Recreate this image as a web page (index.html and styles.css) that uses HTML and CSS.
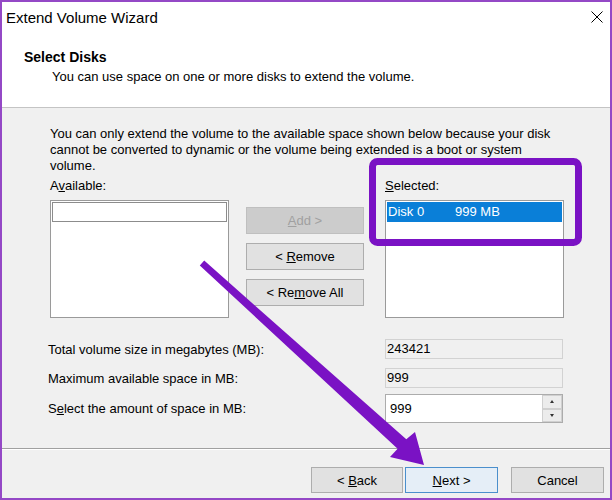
FILE: index.html
```html
<!DOCTYPE html>
<html lang="en">
<head>
    <meta charset="UTF-8">
    <title>Extend Volume Wizard</title>
    <link rel="stylesheet" href="styles.css">
</head>
<body>
    <div class="window">
        <div class="titlebar">
            <span class="title">Extend Volume Wizard</span>
            <svg class="close" width="12" height="12" viewBox="0 0 12 12">
                <path d="M0.5 0.5 L11.5 11.5 M11.5 0.5 L0.5 11.5" stroke="#000" stroke-width="1" fill="none"/>
            </svg>
        </div>

        <div class="header">
            <div class="header-title">Select Disks</div>
            <div class="header-sub">You can use space on one or more disks to extend the volume.</div>
        </div>

        <div class="content">
            <p class="note">You can only extend the volume to the available space shown below because your disk<br>cannot be converted to dynamic or the volume being extended is a boot or system<br>volume.</p>

            <div class="picker">
                <div class="col">
                    <div class="label">A<u>v</u>ailable:</div>
                    <div class="listbox">
                        <div class="focus-row"></div>
                    </div>
                </div>
                <div class="col-buttons">
                    <button class="btn disabled"><u>A</u>dd &gt;</button>
                    <button class="btn">&lt; <u>R</u>emove</button>
                    <button class="btn">&lt; Re<u>m</u>ove All</button>
                </div>
                <div class="col col-right">
                    <div class="label"><u>S</u>elected:</div>
                    <div class="listbox">
                        <div class="item selected">
                            <span class="item-name">Disk 0</span>
                            <span>999 MB</span>
                        </div>
                    </div>
                </div>
            </div>

            <div class="fields">
                <div class="row">
                    <span class="row-label">Total volume size in megabytes (MB):</span>
                    <div class="readonly">243421</div>
                </div>
                <div class="row row-2">
                    <span class="row-label">Maximum available space in MB:</span>
                    <div class="readonly">999</div>
                </div>
                <div class="row row-3">
                    <span class="row-label">S<u>e</u>lect the amount of space in MB:</span>
                    <div class="spin">
                        <span class="spin-value">999</span>
                        <div class="spin-buttons">
                            <div class="spin-btn"><span class="tri-up"></span></div>
                            <div class="spin-btn"><span class="tri-down"></span></div>
                        </div>
                    </div>
                </div>
            </div>
        </div>

        <div class="footer">
            <button class="btn btn-back">&lt; <u>B</u>ack</button>
            <button class="btn btn-next"><u>N</u>ext &gt;</button>
            <button class="btn btn-cancel">Cancel</button>
        </div>

        <!-- annotation drawn over the dialog -->
        <svg class="overlay" width="612" height="500" viewBox="0 0 612 500">
            <rect x="372.5" y="161.5" width="206" height="81" rx="5" ry="5" fill="none" stroke="#7a12c4" stroke-width="7"/>
            <polygon points="204.2,260.6 406.3,439.3 415,432 424,465 390,457 397.6,448.8 199.8,265.4" fill="#7a12c4"/>
        </svg>
    </div>
</body>
</html>
```

FILE: styles.css
```css
body {
    margin: 0;
    padding: 0;
    font-family: "Liberation Sans", Arial, sans-serif;
    font-size: 13px;
    color: #000;
}
.window {
    position: relative;
    width: 612px;
    height: 500px;
    box-sizing: border-box;
    border: 2px solid #9448c6;
    background-color: #f0f0f0;
    display: flex;
    flex-direction: column;
}
.titlebar {
    height: 30px;
    background-color: #fff;
    display: flex;
    align-items: center;
    justify-content: space-between;
    padding-left: 4px;
    padding-right: 7px;
}
.title {
    font-size: 15px;
}
.header {
    background-color: #fff;
    padding: 16px 0 22px 22px;
    border-bottom: 1px solid #c4c4c4;
}
.header-title {
    font-weight: bold;
    font-size: 14px;
    line-height: 18px;
}
.header-sub {
    line-height: 16px;
    margin-top: 3px;
    margin-left: 28px;
}
.content {
    flex: 1;
    padding: 18px 0 0 48px;
}
.note {
    margin: 0;
    line-height: 16px;
}
.picker {
    display: flex;
    margin-top: 4px;
}
.col {
    width: 179px;
}
.col-right {
    margin-left: 21px;
}
.label {
    line-height: 16px;
    height: 16px;
}
.listbox {
    margin-top: 6px;
    height: 118px;
    box-sizing: border-box;
    border: 1px solid #9a9a9a;
    background-color: #fff;
    padding: 1px;
}
.focus-row {
    height: 20px;
    box-sizing: border-box;
    border: 1px solid #8c8c8c;
}
.item {
    height: 20px;
    line-height: 20px;
    display: flex;
    padding-left: 1px;
}
.item.selected {
    background-color: #0a7fd8;
    color: #fff;
}
.item-name {
    width: 67px;
}
.col-buttons {
    width: 118px;
    margin-left: 17px;
    padding-top: 29px;
    display: flex;
    flex-direction: column;
    gap: 9px;
}
.btn {
    font-family: "Liberation Sans", Arial, sans-serif;
    font-size: 13px;
    color: #000;
    height: 27px;
    background-color: #e1e1e1;
    border: 1px solid #adadad;
    padding: 0;
    margin: 0;
}
.btn.disabled {
    background-color: #cccccc;
    border-color: #bfbfbf;
    color: #a0a0a0;
}
.fields {
    margin-top: 21px;
    margin-left: -2px;
    width: 515px;
}
.row {
    display: flex;
    align-items: center;
    height: 20px;
}
.row-2 {
    margin-top: 9px;
}
.row-3 {
    margin-top: 6px;
    height: 29px;
}
.row-label {
    flex: 1;
}
.readonly {
    width: 178px;
    height: 20px;
    box-sizing: border-box;
    border: 1px solid #d2d2d2;
    background-color: #f0f0f0;
    line-height: 18px;
    padding-left: 1px;
}
.spin {
    width: 178px;
    height: 29px;
    box-sizing: border-box;
    border: 1px solid #acacac;
    background-color: #fff;
    display: flex;
    align-items: center;
}
.spin-value {
    flex: 1;
    padding-left: 4px;
}
.spin-buttons {
    width: 20px;
    height: 27px;
    display: flex;
    flex-direction: column;
}
.spin-btn {
    flex: 1;
    background-color: #ececec;
    border: 1px solid #d0d0d0;
    display: flex;
    align-items: center;
    justify-content: center;
}
.tri-up {
    width: 0;
    height: 0;
    border-left: 2px solid transparent;
    border-right: 2px solid transparent;
    border-bottom: 3px solid #333;
}
.tri-down {
    width: 0;
    height: 0;
    border-left: 2px solid transparent;
    border-right: 2px solid transparent;
    border-top: 3px solid #333;
}
.footer {
    height: 50px;
    box-sizing: border-box;
    border-top: 1px solid #a0a0a0;
    box-shadow: inset 0 1px 0 #fff;
    display: flex;
    justify-content: flex-end;
    padding-top: 18px;
    padding-right: 6px;
}
.footer .btn {
    height: 26px;
}
.btn-back {
    width: 92px;
    margin-right: 2px;
}
.btn-next {
    width: 93px;
    margin-right: 13px;
    background-color: #e5eef7;
    border-color: #4b8fcc;
}
.btn-cancel {
    width: 93px;
}
.overlay {
    position: absolute;
    left: -2px;
    top: -2px;
    pointer-events: none;
}
```
